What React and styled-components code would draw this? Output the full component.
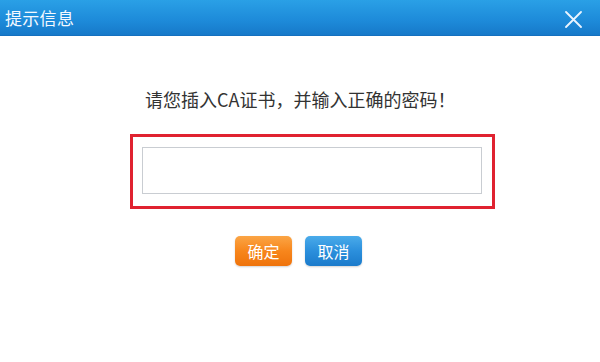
import React from "react";
import styled, { createGlobalStyle } from "styled-components";

const Global = createGlobalStyle`
  html, body { margin: 0; padding: 0; background: #fff; }
  body { font-family: "Microsoft YaHei", "Noto Sans CJK SC", "Liberation Sans", sans-serif; }
  *, *::before, *::after { box-sizing: border-box; }
`;

const Dialog = styled.div`
  width: 600px;
  height: 362px;
  background: #fff;
  display: flex;
  flex-direction: column;
  overflow: hidden;
`;

const TitleBar = styled.div`
  height: 36px;
  flex: none;
  display: flex;
  align-items: center;
  justify-content: space-between;
  padding: 0 16px 0 5px;
  background: linear-gradient(to bottom, #2aa0e6 0%, #1d8ad9 60%, #1679c9 100%);
  border-bottom: 1px solid #1470bf;
`;

const Title = styled.span`
  color: #f4f9ff;
  font-size: 17px;
  letter-spacing: 0.3px;
  line-height: 1;
  margin-top: -1px;
`;

const Close = styled.button`
  width: 22px;
  height: 22px;
  padding: 0;
  border: none;
  background: transparent;
  display: flex;
  align-items: center;
  justify-content: center;
  cursor: pointer;
  margin-top: 4px;
`;

const Body = styled.div`
  display: flex;
  flex-direction: column;
  align-items: flex-start;
  padding: 0 0 0 130px;
`;

const Message = styled.p`
  margin: 52px 0 0 15px;
  font-size: 18px;
  line-height: 22px;
  color: #333;
  white-space: nowrap;
`;

const Highlight = styled.div`
  margin-top: 24px;
  width: 365px;
  height: 75px;
  border: 3px solid #e02230;
  padding: 10px 0 0 9px;
`;

const Field = styled.input`
  display: block;
  width: 340px;
  height: 47px;
  border: 1px solid #c9cdd2;
  outline: none;
  background: #fff;
  font-size: 16px;
  padding: 0 8px;
`;

const Actions = styled.div`
  display: flex;
  gap: 13px;
  margin: 27px 0 0 105px;
`;

const Button = styled.button`
  width: 57px;
  height: 30px;
  border: none;
  border-radius: 5px;
  padding: 0;
  font-family: inherit;
  font-size: 16px;
  color: #fff;
  cursor: pointer;
  box-shadow: 0 1px 2px rgba(0, 0, 0, 0.18);
  background: ${(p) =>
    p.$variant === "primary"
      ? "linear-gradient(to bottom, #fba545 0%, #f7861c 50%, #ef730c 100%)"
      : "linear-gradient(to bottom, #4aabea 0%, #2b8fdc 50%, #1b7bcb 100%)"};
`;

export default function App() {
  return (
    <>
      <Global />
      <Dialog>
        <TitleBar>
          <Title>提示信息</Title>
          <Close aria-label="关闭">
            <svg width="17" height="17" viewBox="0 0 17 17">
              <path d="M1 1 L16 16 M16 1 L1 16" stroke="#eaf4ff" strokeWidth="1.8" strokeLinecap="round" />
            </svg>
          </Close>
        </TitleBar>
        <Body>
          <Message>请您插入CA证书，并输入正确的密码！</Message>
          <Highlight>
            <Field type="password" />
          </Highlight>
          <Actions>
            <Button $variant="primary">确定</Button>
            <Button>取消</Button>
          </Actions>
        </Body>
      </Dialog>
    </>
  );
}
